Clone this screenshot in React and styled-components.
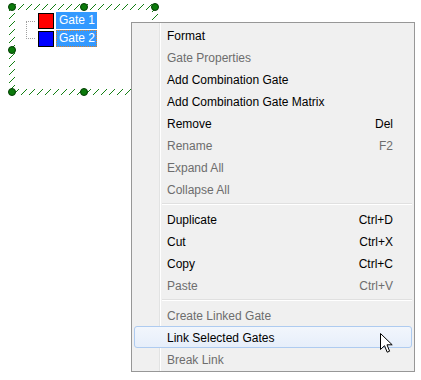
import React from 'react';
import styled, { createGlobalStyle } from 'styled-components';

const GlobalStyle = createGlobalStyle`
  html, body {
    margin: 0;
    padding: 0;
    background: #ffffff;
  }
  body {
    width: 421px;
    height: 380px;
    overflow: hidden;
    font-family: 'Liberation Sans', Arial, sans-serif;
  }
`;

const menuItems = [
  { label: 'Format' },
  { label: 'Gate Properties', disabled: true },
  { label: 'Add Combination Gate' },
  { label: 'Add Combination Gate Matrix' },
  { label: 'Remove', shortcut: 'Del' },
  { label: 'Rename', shortcut: 'F2', disabled: true },
  { label: 'Expand All', disabled: true },
  { label: 'Collapse All', disabled: true },
  { separator: true },
  { label: 'Duplicate', shortcut: 'Ctrl+D' },
  { label: 'Cut', shortcut: 'Ctrl+X' },
  { label: 'Copy', shortcut: 'Ctrl+C' },
  { label: 'Paste', shortcut: 'Ctrl+V', disabled: true },
  { separator: true },
  { label: 'Create Linked Gate', disabled: true },
  { label: 'Link Selected Gates', hover: true },
  { label: 'Break Link', disabled: true }
];

const gates = [
  { name: 'Gate 1', color: '#ff0000' },
  { name: 'Gate 2', color: '#0000ff', focused: true }
];

// resize handles, in % of the frame's centre line
const handles = [
  [0, 0],
  [50, 0],
  [100, 0],
  [0, 50],
  [100, 50],
  [0, 100],
  [50, 100],
  [100, 100]
];

const Cursor = () => (
  <CursorSvg width='14' height='22' viewBox='0 0 14 22'>
    <path
      d='M0.5 0.5 L0.5 16.5 L4.5 12.7 L7.2 19.2 L9.6 18.2 L7 11.8 L12.2 11.8 Z'
      fill='#ffffff'
      stroke='#000000'
      strokeWidth='1'
    />
  </CursorSvg>
);

const App = () => {
  return (
    <Canvas>
      <GlobalStyle />
      <SelectionFrame>
        <FrameInner>
          <Tree>
            <Connector />
            <GateList>
              {gates.map((g) => (
                <GateRow key={g.name}>
                  <Swatch color={g.color} />
                  <GateLabel focused={g.focused}>{g.name}</GateLabel>
                </GateRow>
              ))}
            </GateList>
          </Tree>
        </FrameInner>
        <HandleLayer>
          {handles.map(([x, y], i) => (
            <Handle key={i} style={{ left: x + '%', top: y + '%' }} />
          ))}
        </HandleLayer>
      </SelectionFrame>

      <Menu>
        {menuItems.map((item, i) =>
          item.separator ? (
            <Separator key={i} />
          ) : (
            <Item key={i} disabled={item.disabled} hover={item.hover}>
              <span>{item.label}</span>
              {item.shortcut && <Shortcut>{item.shortcut}</Shortcut>}
              {item.hover && <Cursor />}
            </Item>
          )
        )}
      </Menu>
    </Canvas>
  );
};

export default App;

const Canvas = styled.div`
  position: relative;
  width: 421px;
  height: 380px;
  background: #ffffff;
`;

const SelectionFrame = styled.div`
  position: absolute;
  left: 9px;
  top: 4px;
  width: 149px;
  height: 91px;
  box-sizing: border-box;
  padding: 6px;
  background: repeating-linear-gradient(
    135deg,
    transparent 0px,
    transparent 4.7px,
    #137f13 4.7px,
    #137f13 5.65px
  );
`;

const FrameInner = styled.div`
  width: 100%;
  height: 100%;
  background: #ffffff;
`;

const HandleLayer = styled.div`
  position: absolute;
  left: 3px;
  top: 3px;
  right: 3px;
  bottom: 3px;
`;

const Handle = styled.div`
  position: absolute;
  width: 8px;
  height: 8px;
  transform: translate(-50%, -50%);
  border-radius: 50%;
  background: #0b7a0b;
  border: 1px solid #023d02;
  box-sizing: border-box;
`;

const Tree = styled.div`
  display: flex;
  align-items: flex-start;
  padding: 2px 0 0 11px;
`;

const Connector = styled.div`
  width: 9px;
  height: 18px;
  margin-top: 9px;
  margin-right: 3px;
  border: 1px dotted #a0a0a0;
  border-right: none;
  box-sizing: border-box;
`;

const GateList = styled.div`
  display: flex;
  flex-direction: column;
  gap: 1px;
`;

const GateRow = styled.div`
  display: flex;
  align-items: center;
  height: 17px;
`;

const Swatch = styled.div`
  width: 16px;
  height: 16px;
  box-sizing: border-box;
  border: 1px solid #000000;
  background: ${(p) => p.color};
  margin-right: 2px;
`;

const GateLabel = styled.div`
  height: 17px;
  line-height: 17px;
  box-sizing: border-box;
  padding: 0 2px 0 3px;
  background: #3399ff;
  color: #ffffff;
  font-size: 12px;
  white-space: nowrap;
  outline: ${(p) => (p.focused ? '1px dotted #d9812e' : 'none')};
  outline-offset: -1px;
`;

const Menu = styled.div`
  position: absolute;
  left: 131px;
  top: 22px;
  width: 284px;
  box-sizing: border-box;
  border: 1px solid #979797;
  padding: 1px 0;
  background: linear-gradient(
    to right,
    #f0f0f0 0px,
    #f0f0f0 27px,
    #e2e3e3 27px,
    #e2e3e3 28px,
    #ffffff 28px,
    #ffffff 29px,
    #f0f0f0 29px
  );
  font-size: 12px;
`;

const Item = styled.div`
  position: relative;
  display: flex;
  align-items: center;
  justify-content: space-between;
  height: 22px;
  box-sizing: border-box;
  margin: 0 2px;
  padding: 1px 18px 0 32px;
  border-radius: 3px;
  color: ${(p) => (p.disabled ? '#6d6d6d' : '#000000')};
  border: 1px solid ${(p) => (p.hover ? '#aecbf0' : 'transparent')};
  background: ${(p) =>
    p.hover ? 'linear-gradient(#f2f6fc, #e6eefa)' : 'transparent'};
  white-space: nowrap;
`;

const Shortcut = styled.span`
  text-align: right;
`;

const Separator = styled.div`
  height: 8px;
  margin-left: 30px;
  margin-right: 2px;
  display: flex;
  flex-direction: column;
  justify-content: center;

  &::before {
    content: '';
    display: block;
    height: 1px;
    background: #e0e0e0;
  }
  &::after {
    content: '';
    display: block;
    height: 1px;
    background: #ffffff;
  }
`;

const CursorSvg = styled.svg`
  position: absolute;
  left: 245px;
  top: 6px;
`;
